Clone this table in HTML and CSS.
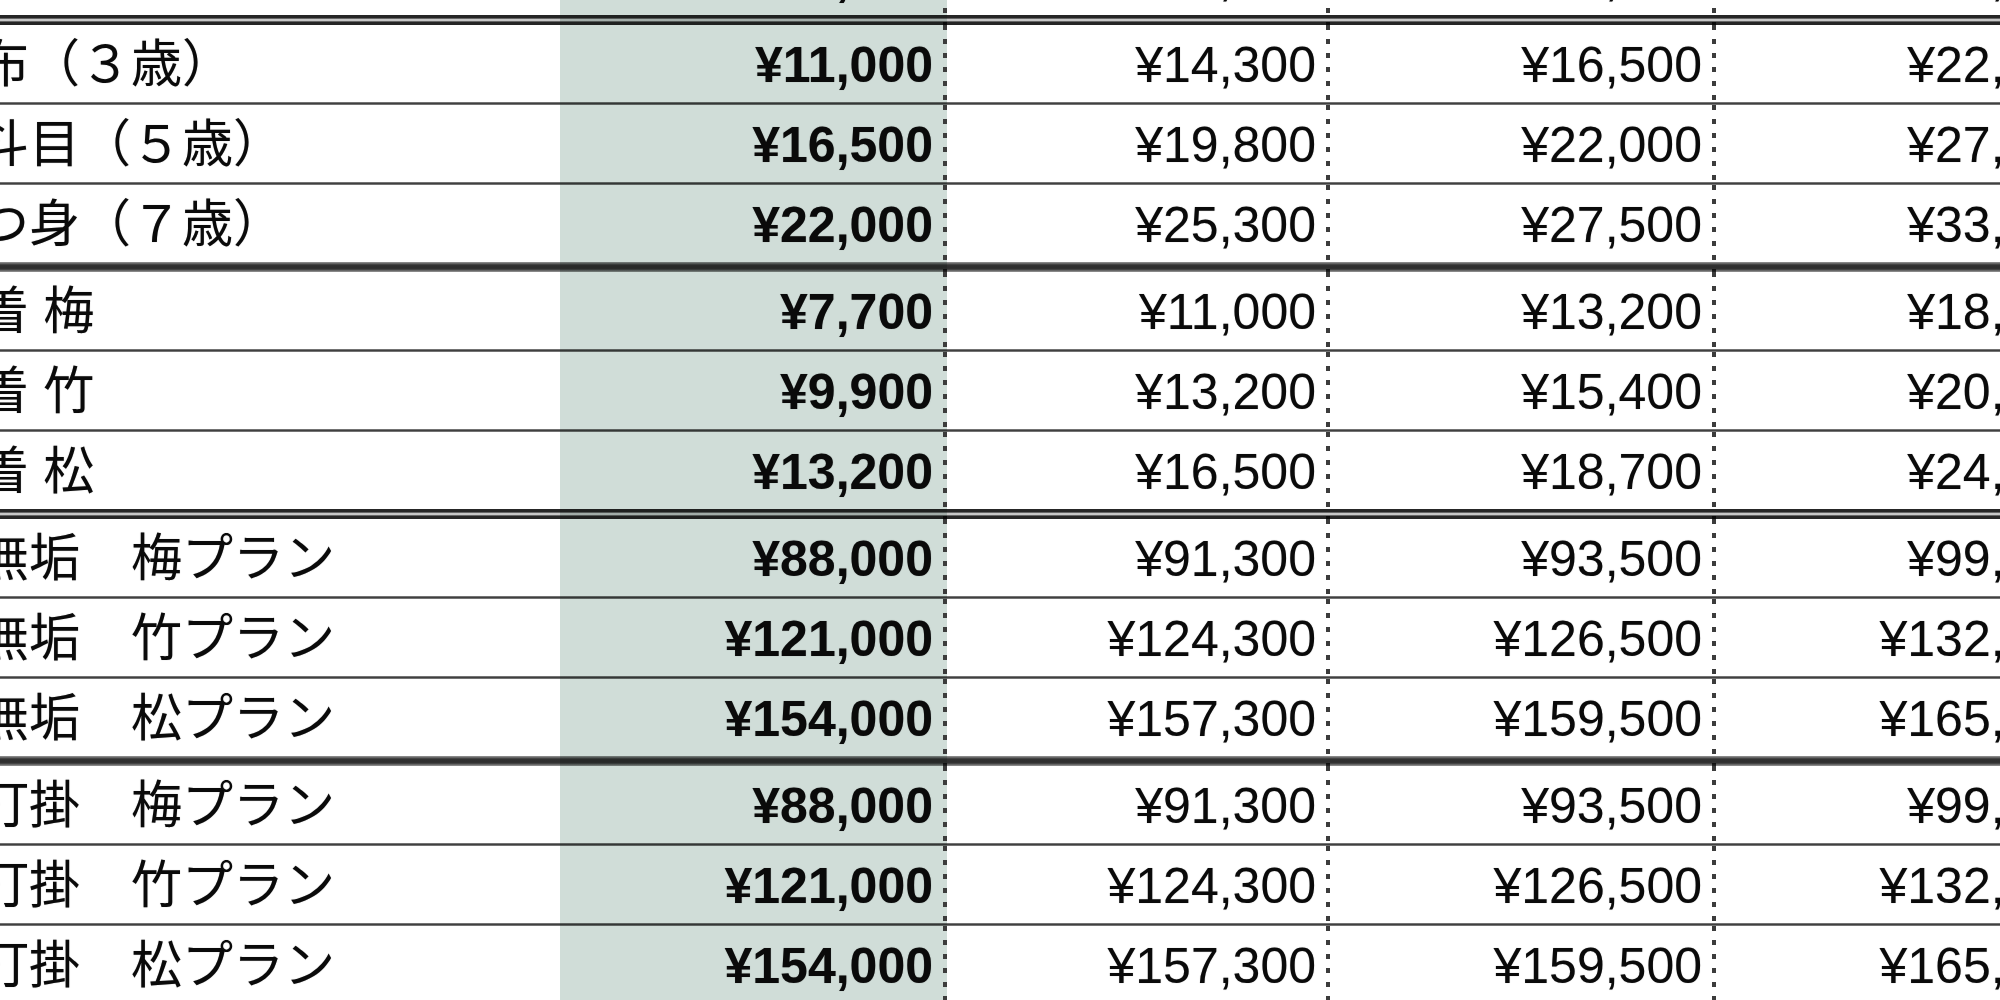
FILE: index.html
```html
<!DOCTYPE html>
<html lang="ja">
<head>
<meta charset="utf-8">
<title>料金表</title>
<link rel="stylesheet" href="styles.css">
</head>
<body>
<div class="sheet">
  <div class="row double">
    <div class="cell label"></div>
    <div class="cell num key">¥8,800</div>
    <div class="cell num">¥12,100</div>
    <div class="cell num">¥14,300</div>
    <div class="cell num">¥19,800</div>
  </div>
  <div class="row">
    <div class="cell label">被布（３歳）</div>
    <div class="cell num key">¥11,000</div>
    <div class="cell num">¥14,300</div>
    <div class="cell num">¥16,500</div>
    <div class="cell num">¥22,000</div>
  </div>
  <div class="row">
    <div class="cell label">熨斗目（５歳）</div>
    <div class="cell num key">¥16,500</div>
    <div class="cell num">¥19,800</div>
    <div class="cell num">¥22,000</div>
    <div class="cell num">¥27,500</div>
  </div>
  <div class="row thick">
    <div class="cell label">四つ身（７歳）</div>
    <div class="cell num key">¥22,000</div>
    <div class="cell num">¥25,300</div>
    <div class="cell num">¥27,500</div>
    <div class="cell num">¥33,000</div>
  </div>
  <div class="row">
    <div class="cell label">産着 梅</div>
    <div class="cell num key">¥7,700</div>
    <div class="cell num">¥11,000</div>
    <div class="cell num">¥13,200</div>
    <div class="cell num">¥18,700</div>
  </div>
  <div class="row">
    <div class="cell label">産着 竹</div>
    <div class="cell num key">¥9,900</div>
    <div class="cell num">¥13,200</div>
    <div class="cell num">¥15,400</div>
    <div class="cell num">¥20,900</div>
  </div>
  <div class="row double">
    <div class="cell label">産着 松</div>
    <div class="cell num key">¥13,200</div>
    <div class="cell num">¥16,500</div>
    <div class="cell num">¥18,700</div>
    <div class="cell num">¥24,200</div>
  </div>
  <div class="row">
    <div class="cell label">白無垢　梅プラン</div>
    <div class="cell num key">¥88,000</div>
    <div class="cell num">¥91,300</div>
    <div class="cell num">¥93,500</div>
    <div class="cell num">¥99,000</div>
  </div>
  <div class="row">
    <div class="cell label">白無垢　竹プラン</div>
    <div class="cell num key">¥121,000</div>
    <div class="cell num">¥124,300</div>
    <div class="cell num">¥126,500</div>
    <div class="cell num">¥132,000</div>
  </div>
  <div class="row thick">
    <div class="cell label">白無垢　松プラン</div>
    <div class="cell num key">¥154,000</div>
    <div class="cell num">¥157,300</div>
    <div class="cell num">¥159,500</div>
    <div class="cell num">¥165,000</div>
  </div>
  <div class="row">
    <div class="cell label">色打掛　梅プラン</div>
    <div class="cell num key">¥88,000</div>
    <div class="cell num">¥91,300</div>
    <div class="cell num">¥93,500</div>
    <div class="cell num">¥99,000</div>
  </div>
  <div class="row">
    <div class="cell label">色打掛　竹プラン</div>
    <div class="cell num key">¥121,000</div>
    <div class="cell num">¥124,300</div>
    <div class="cell num">¥126,500</div>
    <div class="cell num">¥132,000</div>
  </div>
  <div class="row">
    <div class="cell label">色打掛　松プラン</div>
    <div class="cell num key">¥154,000</div>
    <div class="cell num">¥157,300</div>
    <div class="cell num">¥159,500</div>
    <div class="cell num">¥165,000</div>
  </div>
</div>
</body>
</html>
```

FILE: styles.css
```css
html, body {
  margin: 0;
  padding: 0;
  background: #ffffff;
  overflow: hidden;
}

body {
  width: 2000px;
  height: 1000px;
}

.sheet {
  margin: -62px 0 0 -73px;
  font-family: "Liberation Sans", "Noto Sans CJK JP", sans-serif;
  font-size: 50px;
  line-height: 50px;
  color: #0a0a0a;
  text-shadow: 0 0 1px rgba(0, 0, 0, 0.35);
}

.row {
  display: grid;
  grid-template-columns: 633px 387px 383px 386px 386px;
  --rh: 3px;
  --rule: linear-gradient(to bottom, rgba(0,0,0,0.45), rgba(0,0,0,0.75) 50%, rgba(0,0,0,0.45));
}

.row.thick {
  --rh: 10px;
  --rule: linear-gradient(to bottom, rgba(0,0,0,0.4), rgba(0,0,0,0.8) 30%, rgba(0,0,0,0.82) 50%, rgba(0,0,0,0.8) 70%, rgba(0,0,0,0.4));
}

.row.double {
  --rh: 10px;
  --rule: linear-gradient(to bottom, rgba(0,0,0,0.85) 0, rgba(0,0,0,0.85) 33%, rgba(0,0,0,0.22) 38%, rgba(0,0,0,0.22) 62%, rgba(0,0,0,0.85) 67%, rgba(0,0,0,0.85) 100%);
}

.cell {
  --fill: #ffffff;
  box-sizing: border-box;
  height: calc(77px + var(--rh));
  padding-bottom: calc(var(--rh) + 12px);
  display: flex;
  align-items: flex-end;
  white-space: nowrap;
  overflow: hidden;
  background:
    var(--rule) left bottom / 100% var(--rh) no-repeat,
    var(--fill);
}

.label {
  font-size: 51px;
}

.num {
  --dots: repeating-linear-gradient(to bottom, #3c3c3c 0, #3c3c3c 5px, rgba(0,0,0,0) 5px, rgba(0,0,0,0) 14px);
  justify-content: flex-end;
  padding-right: 14px;
  background:
    var(--rule) left bottom / 100% var(--rh) no-repeat,
    var(--dots) right top / 4px 100% no-repeat,
    var(--fill);
}

.key {
  --fill: #d0ddd8;
  font-weight: bold;
}
```
